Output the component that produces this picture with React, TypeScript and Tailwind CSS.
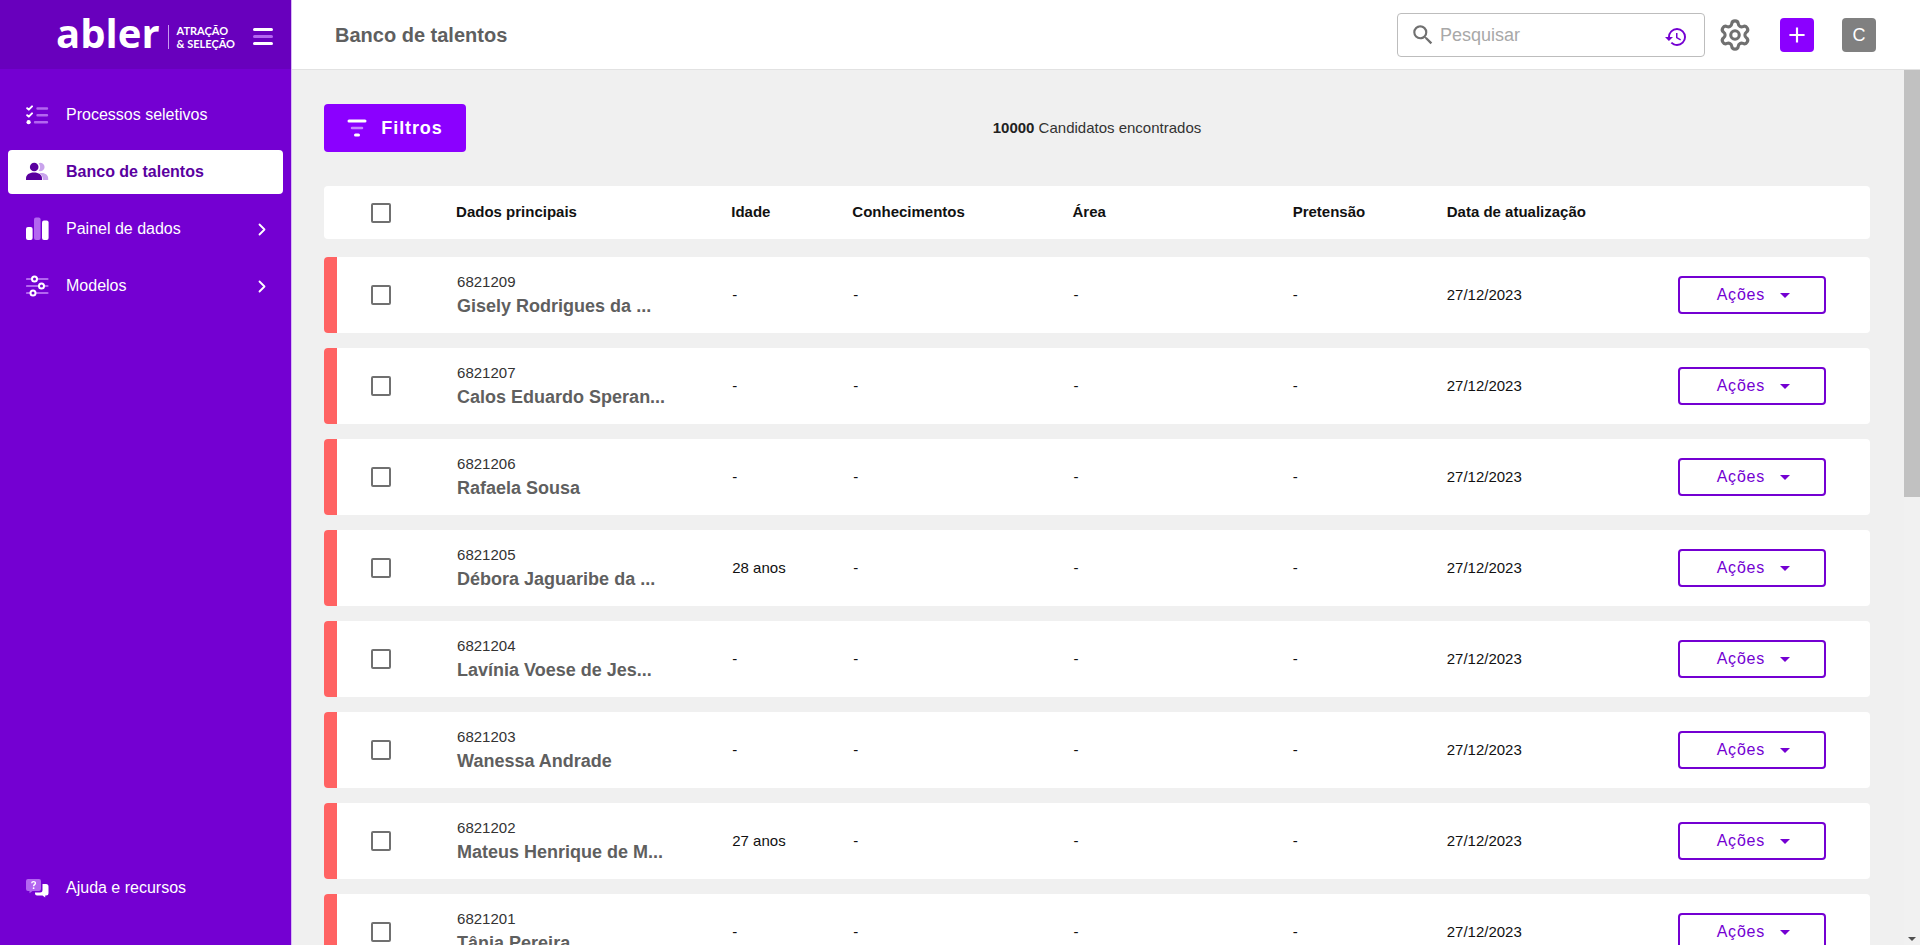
import * as React from 'react';
import { Settings } from 'lucide-react';
import { MdAdd, MdArrowDropDown, MdHistory, MdSearch } from 'react-icons/md';

interface ICandidate {
  id: number;
  name: string;
  age?: string;
}

const candidates: ICandidate[] = [
  { id: 6821209, name: 'Gisely Rodrigues da ...' },
  { id: 6821207, name: 'Calos Eduardo Speran...' },
  { id: 6821206, name: 'Rafaela Sousa' },
  { id: 6821205, name: 'Débora Jaguaribe da ...', age: '28 anos' },
  { id: 6821204, name: 'Lavínia Voese de Jes...' },
  { id: 6821203, name: 'Wanessa Andrade' },
  { id: 6821202, name: 'Mateus Henrique de M...', age: '27 anos' },
  { id: 6821201, name: 'Tânia Pereira' },
];

const ROW_GRID =
  'grid items-center grid-cols-[132fr_275fr_121fr_220fr_220fr_154fr_231fr_192fr] rounded-sm bg-white';

const ProcessIcon = () => (
  <svg width="23" height="20" viewBox="0 0 23 20" fill="none" strokeLinecap="round">
    <g stroke="#fff" strokeWidth="2" strokeLinejoin="round">
      <path d="M1.2 3.2 2.8 4.6 6 1.4" />
      <path d="M1.2 10.2 2.8 11.6 6 8.4" />
    </g>
    <circle cx="2.6" cy="17.2" r="2.1" fill="#fff" />
    <path d="M11.5 3.5H21M11.5 10.3H21M9 17.2H21" stroke="#b366f0" strokeWidth="2.4" />
  </svg>
);

const PeopleIcon = () => (
  <svg width="23" height="20" viewBox="0 0 23 20">
    <g fill="#c9a3ec">
      <path d="M12.6 1.2a4.2 4.2 0 1 1 0 7.6 6 6 0 0 0 0-7.6Z" />
      <path d="M13.4 11.2c5.4-1 8.8 1.6 8.800 5.300V18h-5.400c.2-2.700-.9-5.200-3.400-6.800Z" />
    </g>
    <circle cx="8.2" cy="5" r="4.3" fill="#5a009f" />
    <path d="M0 18v-1.500c0-3.600 3.200-5.900 8-5.900s8 2.300 8 5.900V18Z" fill="#5a009f" />
  </svg>
);

const ChartIcon = () => (
  <svg width="23" height="24" viewBox="0 0 23 24">
    <rect y="10" width="6.6" height="13" rx="2" fill="#fff" />
    <rect x="8" y="0.5" width="6.6" height="22.5" rx="2" fill="#b366f0" />
    <rect x="16" y="3.5" width="6.6" height="19.5" rx="2" fill="#fff" />
  </svg>
);

const SlidersIcon = () => (
  <svg width="23" height="22" viewBox="0 0 23 22">
    <path d="M1 4h20.5M1 11h20.5M1 18h20.5" stroke="#b366f0" strokeWidth="2.2" strokeLinecap="round" />
    <g fill="#7400d2" stroke="#fff" strokeWidth="2">
      <circle cx="8.5" cy="4" r="2.5" />
      <circle cx="15.5" cy="11" r="2.5" />
      <circle cx="7" cy="18" r="2.5" />
    </g>
  </svg>
);

const HelpIcon = () => (
  <svg width="23" height="20" viewBox="0 0 23 20">
    <path d="M16.5 6H20a2.500 2.500 0 0 1 2.500 2.500v6.500a2.500 2.500 0 0 1-2.500 2.500h-.8V19.500L16.500 17.500H11A2 2 0 0 1 9 15.500V14.500h5a2.500 2.500 0 0 0 2.500-2.500Z" fill="#fff" />
    <path d="M2 1h11a2 2 0 0 1 2 2v8a2 2 0 0 1-2 2H6.500L3.500 15.200V13H2a2 2 0 0 1-2-2V3a2 2 0 0 1 2-2Z" fill="#b366f0" />
    <path d="M5.700 5.200c.2-2.200 3.800-2.100 3.700.1 0 1.300-1.800 1.400-1.800 2.900" fill="none" stroke="#fff" strokeWidth="1.4" />
    <circle cx="7.6" cy="10.2" r="0.9" fill="#fff" />
  </svg>
);

const ChevronIcon = () => (
  <svg width="8" height="13" viewBox="0 0 8 13" fill="none" stroke="#fff" strokeWidth="1.8">
    <path d="M1.500 1.500l5 5-5 5" strokeLinecap="round" strokeLinejoin="round" />
  </svg>
);

interface NavItemProps {
  label: string;
  icon: React.ReactNode;
  active?: boolean;
  expandable?: boolean;
}

const NavItem: React.FC<NavItemProps> = ({ label, icon, active, expandable }) => (
  <a
    href="#"
    className={`flex h-11 items-center rounded-sm pl-[18px] pr-[17px] ${
      active ? 'bg-white font-bold text-[#5a009f]' : 'text-white'
    }`}
  >
    <span className="w-10 shrink-0">{icon}</span>
    <span className="flex-1">{label}</span>
    {expandable && <ChevronIcon />}
  </a>
);

const Sidebar = () => (
  <aside className="flex w-[292px] shrink-0 flex-col border-r border-[#d9b8f5] bg-[#7400d2]">
    <div className="flex h-[69px] shrink-0 items-center justify-end bg-[#6800bd] pr-[18px] text-white">
      <span className="pb-1 font-['Open_Sans',sans-serif] text-[40px] leading-[52px] font-bold">
        abler
      </span>
      <div className="flex items-center pt-1">
        <span className="mx-2 h-6 w-px bg-[#c99af0]" />
        <span className="font-['Lato',sans-serif] text-[11px] leading-[13px] font-bold">
          ATRAÇÃO
          <br />& SELEÇÃO
        </span>
        <button aria-label="Menu" className="ml-[18px] flex w-5 flex-col gap-1">
          <span className="h-[3px] rounded-full bg-white" />
          <span className="h-[3px] rounded-full bg-[#b366f0]" />
          <span className="h-[3px] rounded-full bg-white" />
        </button>
      </div>
    </div>
    <nav className="flex flex-1 flex-col gap-[13px] px-2 pt-6 pb-[35px]">
      <NavItem label="Processos seletivos" icon={<ProcessIcon />} />
      <NavItem label="Banco de talentos" icon={<PeopleIcon />} active />
      <NavItem label="Painel de dados" icon={<ChartIcon />} expandable />
      <NavItem label="Modelos" icon={<SlidersIcon />} expandable />
      <div className="mt-auto">
        <NavItem label="Ajuda e recursos" icon={<HelpIcon />} />
      </div>
    </nav>
  </aside>
);

const TopBar = () => (
  <header className="flex h-[70px] shrink-0 items-center border-b border-[#e2e2e2] bg-white pr-11 pl-[43px]">
    <h1 className="flex-1 text-xl font-bold text-[#5f5f5f]">Banco de talentos</h1>
    <label className="flex h-11 w-[308px] items-center rounded-sm border border-[#bdbdbd] pr-4 pl-3">
      <MdSearch size={26} color="#707070" />
      <input
        type="text"
        aria-label="Pesquisar"
        placeholder="Pesquisar"
        className="ml-1 min-w-0 flex-1 text-lg outline-none placeholder:text-[#a8a8a8]"
      />
      <MdHistory size={24} color="#7400d2" className="mt-1" />
    </label>
    <button aria-label="Configurações" className="ml-[13px]">
      <Settings size={34} color="#707070" strokeWidth={2.2} />
    </button>
    <button
      aria-label="Adicionar"
      className="ml-7 flex size-[34px] items-center justify-center rounded-sm bg-[#8b00ff] text-white"
    >
      <MdAdd size={26} />
    </button>
    <button className="ml-7 size-[34px] rounded-sm bg-[#808080] text-lg text-white">C</button>
  </header>
);

const Checkbox: React.FC<{ label: string }> = ({ label }) => (
  <input
    type="checkbox"
    aria-label={label}
    className="block size-5 appearance-none rounded-xs border-2 border-[#707070] bg-white"
  />
);

const CandidateRow: React.FC<{ candidate: ICandidate }> = ({ candidate }) => (
  <tr className={`${ROW_GRID} h-[76px] overflow-hidden text-[#111]`}>
    <td className="flex h-full items-center border-l-[13px] border-[#ff6363] pl-[34px]">
      <Checkbox label={candidate.name} />
    </td>
    <td className="pb-0.5 pl-px">
      <div className="leading-6 text-[#333]">{candidate.id}</div>
      <div className="text-lg leading-6 font-bold text-[#5f5f5f]">{candidate.name}</div>
    </td>
    <td className="pl-px">{candidate.age ?? '-'}</td>
    <td className="pl-px">-</td>
    <td className="pl-px">-</td>
    <td>-</td>
    <td>27/12/2023</td>
    <td>
      <button className="flex h-[38px] w-[148px] items-center justify-center gap-2 rounded-sm border-2 border-[#7400d2] pl-[10px] text-base tracking-wider text-[#7400d2]">
        Ações
        <MdArrowDropDown size={24} />
      </button>
    </td>
  </tr>
);

const CandidateTable = () => (
  <table className="mt-[34px] block text-[15px]">
    <thead className="block">
      <tr className={`${ROW_GRID} h-[53px] text-left text-[#111]`}>
        <th className="pl-[47px]">
          <Checkbox label="Selecionar todos" />
        </th>
        <th>Dados principais</th>
        <th>Idade</th>
        <th>Conhecimentos</th>
        <th>Área</th>
        <th>Pretensão</th>
        <th>Data de atualização</th>
        <th />
      </tr>
    </thead>
    <tbody className="mt-[18px] flex flex-col gap-[15px]">
      {candidates.map((candidate) => (
        <CandidateRow key={candidate.id} candidate={candidate} />
      ))}
    </tbody>
  </table>
);

const ScrollBar = () => (
  <div className="flex w-4 shrink-0 flex-col items-center justify-between bg-[#f1f1f1] pb-1">
    <div className="h-[49%] w-full bg-[#c1c1c1]" />
    <svg width="8" height="4" viewBox="0 0 8 4">
      <path d="M0 0h8L4 4Z" fill="#505050" />
    </svg>
  </div>
);

export default function App() {
  return (
    <div className="flex h-screen overflow-hidden bg-[#f0f0f0] font-['Liberation_Sans',Arial,sans-serif] text-base">
      <Sidebar />
      <div className="flex min-w-0 flex-1 flex-col">
        <TopBar />
        <div className="flex min-h-0 flex-1">
          <main className="min-w-0 flex-1 overflow-hidden pt-[34px] pr-[34px] pl-8">
            <div className="grid grid-cols-3 items-center">
              <button className="flex h-12 w-[142px] items-center justify-center gap-[14px] rounded-sm bg-[#8b00ff] text-lg font-bold tracking-wider text-white">
                <svg width="20" height="18" viewBox="0 0 20 18" strokeWidth="3" strokeLinecap="round">
                  <path d="M2 2h16M8.5 16h3" stroke="#fff" />
                  <path d="M5 9h10" stroke="#c685ff" strokeWidth="2.5" />
                </svg>
                Filtros
              </button>
              <p className="text-center text-[15px] text-[#333]">
                <b className="text-[#222]">10000</b> Candidatos encontrados
              </p>
            </div>
            <CandidateTable />
          </main>
          <ScrollBar />
        </div>
      </div>
    </div>
  );
}
